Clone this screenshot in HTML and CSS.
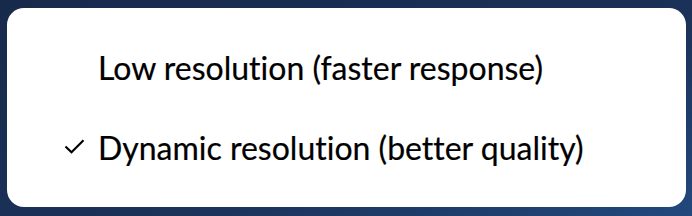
FILE: index.html
```html
<!DOCTYPE html>
<html>
<head>
  <meta charset="UTF-8">
  <title>Resolution</title>
  <link rel="stylesheet" href="styles.css">
</head>
<body>
  <div class="menu">
    <div class="menu-item">
      <span class="check"></span>
      <span class="label">Low resolution (faster response)</span>
    </div>
    <div class="menu-item">
      <span class="check">
        <svg width="21" height="15" viewBox="0 0 21 15"><path d="M1.5 7.5 L7.5 13.3 L19.5 1.3" fill="none" stroke="#000" stroke-width="2.2"/></svg>
      </span>
      <span class="label">Dynamic resolution (better quality)</span>
    </div>
  </div>
</body>
</html>
```

FILE: styles.css
```css
html, body {
  height: 100%;
}

body {
  margin: 0;
  padding: 8px 6px 9px 7px;
  box-sizing: border-box;
  background: linear-gradient(160deg, #182a4c 0%, #1b3259 60%, #22487c 100%);
  font-family: Lato, "Open Sans", sans-serif;
  overflow: hidden;
}

.menu {
  height: 100%;
  background: white;
  border-radius: 17px;
  display: flex;
  flex-direction: column;
  justify-content: center;
  gap: 40px;
  padding-left: 57px;
  box-sizing: border-box;
}

.menu-item {
  display: flex;
  align-items: center;
  height: 40px;
}

.check {
  width: 34px;
  display: flex;
  align-items: center;
  margin-top: -2px;
}

.label {
  font-size: 32px;
  color: #000;
  font-variant-ligatures: none;
  -webkit-text-stroke: 0.2px #000;
}
```
